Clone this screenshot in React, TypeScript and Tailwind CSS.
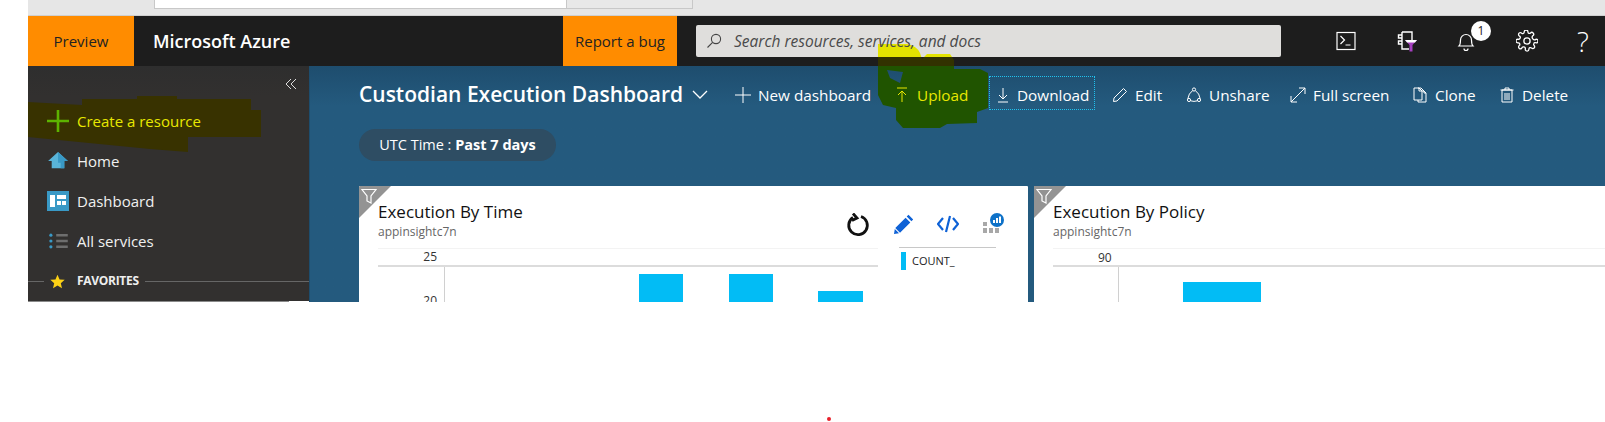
import type { ReactNode } from "react";

function Stroke({ children }: { children: ReactNode }) {
  return (
    <svg viewBox="0 0 16 16" fill="none" stroke="currentColor" strokeWidth="1" className="h-4 w-4 shrink-0">
      {children}
    </svg>
  );
}

function ToolItem({ icon, label, className = "" }: { icon: ReactNode; label: string; className?: string }) {
  return (
    <div className={"flex items-center gap-[7px] text-[15.3px] leading-5 text-white " + className}>
      <Stroke>{icon}</Stroke>
      <span>{label}</span>
    </div>
  );
}

function NavItem({ icon, label, yellow }: { icon: ReactNode; label: string; yellow?: boolean }) {
  return (
    <div className="relative z-10 flex h-10 items-center pl-[17px]">
      <div className="mr-[6px] flex w-[26px] shrink-0 justify-center">{icon}</div>
      <span className={"text-[15px] " + (yellow ? "text-[#e8e800]" : "text-[#f0f0f0]")}>{label}</span>
    </div>
  );
}

function FilterCorner() {
  return (
    <div className="absolute left-0 top-0 z-10 h-[32px] w-[32px]">
      <svg viewBox="0 0 32 32" className="h-full w-full">
        <path d="M0 0h32L0 32z" fill="#939393" />
        <path d="M3 3.500h14l-5 6.500v7l-4-2v-5z" fill="none" stroke="#fff" strokeWidth="1.2" />
      </svg>
    </div>
  );
}

function Bar({ className }: { className: string }) {
  return <div className={"bg-[#02bcf5] " + className} />;
}

function CardHead({ title }: { title: string }) {
  return (
    <div className="h-[63px] border-b border-[#f3f3f3] pt-[14px]">
      <div className="text-[17px] font-medium leading-6 text-[#111]">{title}</div>
      <div className="text-[12px] leading-[16px] text-[#666]">appinsightc7n</div>
    </div>
  );
}

export default function App() {
  return (
    <div className="relative isolate h-[422px] w-[1605px] overflow-hidden bg-white font-['Open_Sans','Noto_Sans',sans-serif]">
      <div className="ml-[28px]">
        {/* browser strip */}
        <div className="flex h-[16px] items-start border-b border-[#cfcfcf] bg-[#e6e6e6] pl-[126px]">
          <div className="h-[9px] w-[413px] border-x border-b border-[#c8c8c8] bg-white" />
          <div className="h-[9px] w-[126px] border-r border-b border-[#c8c8c8] bg-[#e8e8e8]" />
        </div>

        {/* top bar */}
        <div className="flex h-[50px] items-stretch bg-[#1d1d1d]">
          <div className="relative z-10 flex w-[106px] items-center justify-center bg-[#ff8c00] text-[15px] text-[#222]">Preview</div>
          <div className="relative z-10 flex w-[429px] items-center pl-[19px] text-[18px] font-semibold text-white">Microsoft Azure</div>
          <div className="relative z-10 flex w-[114px] items-center justify-center bg-[#ff8c00] text-[15px] text-[#222]">Report a bug</div>
          <div className="ml-[19px] mt-[9px] flex h-[32px] w-[585px] items-center rounded-[2px] bg-[#dfdedc] pl-[10px]">
            <svg viewBox="0 0 16 16" fill="none" stroke="#444" strokeWidth="1.1" className="relative z-10 h-4 w-4">
              <circle cx="10" cy="6" r="4.600" />
              <path d="M6.600 9.400L1.500 14.500" />
            </svg>
            <span className="relative z-10 ml-[12px] pt-[1px] text-[15.5px] italic text-[#4a4a4a]">Search resources, services, and docs</span>
          </div>
          <div className="relative z-10 ml-[55px] flex items-center text-white">
            <svg viewBox="0 0 20 20" fill="none" stroke="#fff" strokeWidth="1.2" className="h-5 w-5">
              <rect x="1" y="1.500" width="18" height="17" />
              <path d="M4.500 5l4 4-4 4M9.500 14h5" />
            </svg>
            <svg viewBox="0 0 22 22" fill="none" strokeWidth="1.4" className="ml-[40px] h-[22px] w-[22px]">
              <path d="M6 2h10v8M13 19H6V2M6 5H2.500v3H6M6 11H2.500v3H6" stroke="#fff" />
              <path d="M9 10h12l-4.500 5v6.500h-3V15z" fill="#a53fc0" />
              <path d="M9 10h12l-2 2.500h-8z" fill="#fff" />
            </svg>
            <div className="relative ml-[38px]">
              <svg viewBox="0 0 20 22" fill="none" stroke="#fff" strokeWidth="1.2" className="h-[22px] w-5">
                <path d="M3 16c1.500-1.500 1.500-3 1.500-6a5.500 5.500 0 0111 0c0 3 0 4.500 1.500 6zM8 18.500a2 2 0 004 0" />
              </svg>
              <div className="absolute -right-[15px] -top-[9px] flex h-[20px] w-[20px] items-center justify-center rounded-full bg-white text-[12px] text-[#222]">1</div>
            </div>
            <svg viewBox="0 0 24 24" fill="none" stroke="#fff" strokeWidth="1.4" className="ml-[40px] h-[22px] w-[22px]">
              <circle cx="12" cy="12" r="3.400" />
              <path d="M19.400 15a1.650 1.650 0 00.33 1.820l.06.06a2 2 0 11-2.830 2.830l-.06-.06a1.650 1.650 0 00-2.800 1.170V21a2 2 0 11-4 0v-.09A1.650 1.650 0 006.300 19.800l-.06.06a2 2 0 11-2.830-2.830l.06-.06A1.650 1.650 0 002.300 14H2a2 2 0 110-4h.09A1.650 1.650 0 003.400 6.300l-.06-.06a2 2 0 112.830-2.830l.06.06A1.650 1.650 0 009 2.300V2a2 2 0 114 0v.09a1.650 1.650 0 002.800 1.170l.06-.06a2 2 0 112.830 2.830l-.06.06A1.650 1.650 0 0021.900 10H22a2 2 0 110 4h-.09a1.650 1.650 0 00-2.510 1z" />
            </svg>
            <span className="ml-[39px] text-[28px] font-light leading-none">?</span>
          </div>
        </div>

        {/* body */}
        <div className="flex h-[236px]">
          <aside className="w-[281px] shrink-0 border-b border-[#8a8a8a] bg-linear-to-b from-[#2e2e2e] to-[#32302f] to-[30px]">
            <div className="relative z-10 flex h-[35px] items-center justify-end pr-[12px]">
              <svg viewBox="0 0 12 12" fill="none" stroke="#ddd" strokeWidth="1" className="h-3 w-3">
                <path d="M6 1L1 6l5 5M11 1L6 6l5 5" />
              </svg>
            </div>
            <NavItem
              yellow
              label="Create a resource"
              icon={
                <svg viewBox="0 0 22 22" className="h-[22px] w-[22px]" stroke="#5db300" strokeWidth="2.600">
                  <path d="M11 0v22M0 11h22" />
                </svg>
              }
            />
            <NavItem
              label="Home"
              icon={
                <svg viewBox="0 0 22 20" className="h-[18px] w-[22px]">
                  <path d="M11 0L0 10h4v8h14v-8h4z" fill="#59b4d9" />
                  <path d="M11 0L22 10h-4v8h-4v-6h-3z" fill="#3999c6" />
                </svg>
              }
            />
            <NavItem
              label="Dashboard"
              icon={
                <svg viewBox="0 0 22 20" className="h-[20px] w-[22px]">
                  <rect width="22" height="20" fill="#3999c6" />
                  <path d="M3 4h5v12H3zM10 4h9v4h-9zM10 10h4v4h-4zM15 10h4v4h-4z" fill="#fff" />
                </svg>
              }
            />
            <NavItem
              label="All services"
              icon={
                <svg viewBox="0 0 22 18" className="h-[16px] w-[20px]">
                  <path d="M9 1h13v3H9zM9 7.500h13v3H9zM9 14h13v3H9z" fill="#6e6e6e" />
                  <circle cx="3" cy="2.500" r="1.800" fill="#3999c6" />
                  <circle cx="3" cy="9" r="1.800" fill="#3999c6" />
                  <circle cx="3" cy="15.500" r="1.800" fill="#3999c6" />
                </svg>
              }
            />
            <div className="relative z-10 flex h-[40px] items-center">
              <div className="h-px w-[16px] bg-[#666]" />
              <svg viewBox="0 0 24 24" className="ml-[6px] h-[15px] w-[15px]" fill="#fcd116">
                <path d="M12 1l3.300 7.600 8.200.7-6.200 5.400 1.900 8.100L12 18.500l-7.200 4.300 1.900-8.100L.5 9.300l8.200-.7z" />
              </svg>
              <span className="ml-[12px] text-[12px] font-bold tracking-[-0.3px] text-[#eee]">FAVORITES</span>
              <div className="ml-[6px] h-px flex-1 bg-[#666]" />
            </div>
          </aside>

          <main className="min-w-0 flex-1 overflow-hidden border-l-[1px] border-[#1d4d6e] bg-linear-to-b from-[#1e4d6e] to-[#245a7e] to-[40px]">
            <div className="flex h-[63px] items-center pb-[6px] pl-[49px]">
              <div className="relative z-10 flex flex-1 items-center pt-[1px]">
                <span className="w-[333px] shrink-0 text-[21px] font-semibold text-white">Custodian Execution Dashboard</span>
                <svg viewBox="0 0 16 10" fill="none" stroke="#fff" strokeWidth="1.3" className="h-[10px] w-4">
                  <path d="M1 1l7 7 7-7" />
                </svg>
                <ToolItem className="ml-[27px] w-[162px]" label="New dashboard" icon={<path d="M8 0v16M0 8h16" />} />
                <div className="flex w-[92px] items-center gap-[10px] text-[15.3px] text-[#e8e800]">
                  <svg viewBox="0 0 10 16" fill="none" stroke="currentColor" className="h-4 w-[10px] shrink-0">
                    <path d="M0 1h10M5 15V4M1 8l4-4 4 4" />
                  </svg>
                  <span>Upload</span>
                </div>
                <div className="mb-[4px] flex h-[34px] w-[106px] items-center gap-[9px] border border-dotted border-[#1fc3f0] pl-[8px] pt-[4px] text-[15.3px] text-white">
                  <svg viewBox="0 0 10 16" fill="none" stroke="currentColor" className="h-4 w-[10px] shrink-0">
                    <path d="M0 15h10M5 1v11M1 8l4 4 4-4" />
                  </svg>
                  <span>Download</span>
                </div>
                <ToolItem className="ml-[17px] w-[74px]" label="Edit" icon={<path d="M11.500 1.500l3 3L5 14l-3.500.5L2 11z" />} />
                <ToolItem
                  className="w-[104px]"
                  label="Unshare"
                  icon={
                    <>
                      <circle cx="8" cy="2.500" r="1.600" />
                      <circle cx="3" cy="13" r="1.600" />
                      <circle cx="13" cy="13" r="1.600" />
                      <path d="M6.700 3.500Q2.500 6.500 1.800 11.800M9.300 3.500Q13.500 6.500 14.200 11.800M4.600 13.800Q8 15 11.400 13.800" />
                    </>
                  }
                />
                <ToolItem className="w-[122px]" label="Full screen" icon={<path d="M1 15L15 1M9 1h6v6M1 9v6h6" />} />
                <ToolItem
                  className="w-[87px]"
                  label="Clone"
                  icon={<path d="M2 1h5l3 3v9H2zM7 1v3h3M6 1h3l3 3v0l2 2v9H6v-2M10 4h2v2h2" />}
                />
                <ToolItem label="Delete" icon={<path d="M3 3h10v12H3zM1.500 3h13M6 3V1h4v2M6 6v7M8 6v7M10 6v7" />} />
              </div>
            </div>

            <div className="relative z-10 ml-[49px] flex h-[32px] w-[197px] items-center justify-center rounded-full bg-[#2e4d63] text-[14.5px] text-white">
              UTC Time :&nbsp;<b>Past 7 days</b>
            </div>

            <div className="mt-[25px] flex pl-[49px]">
              {/* first card */}
              <div className="relative h-[200px] w-[669px] shrink-0 overflow-hidden rounded-[1px] bg-white px-[19px]">
                <FilterCorner />
                <div className="flex">
                  <div className="w-[500px] shrink-0">
                    <div className="relative">
                      <CardHead title="Execution By Time" />
                      <div className="absolute right-0 top-[27px] flex items-center">
                        <svg viewBox="0 0 24 24" fill="none" stroke="#111" strokeWidth="2.800" className="mr-[8px] h-[24px] w-[24px]">
                          <path d="M15 3.500a9.300 9.300 0 11-8 1" />
                          <path d="M7 .5l4 4.500-5 2.500" />
                        </svg>
                      </div>
                    </div>
                    <div className="flex h-[18px] items-center border-b-2 border-[#dcdcdc] pr-[441px] text-right text-[12px] text-[#333]">
                      <span className="w-full">25</span>
                    </div>
                    <div className="flex">
                      <div className="w-[67px] shrink-0 border-r border-[#d0d0d0] pr-[7px] pt-[26px] text-right text-[12px] leading-4 text-[#333]">20</div>
                      <div className="flex items-start pt-[7px]">
                        <Bar className="ml-[194px] h-[40px] w-[44px]" />
                        <Bar className="ml-[46px] h-[40px] w-[44px]" />
                        <Bar className="ml-[45px] mt-[17px] h-[30px] w-[45px]" />
                      </div>
                    </div>
                  </div>
                  <div className="relative -ml-[21px] w-[190px]">
                    <div className="absolute left-0 top-[27px] flex items-center gap-[23px] pl-[37px]">
                      <svg viewBox="0 0 20 20" className="h-[20px] w-[20px]" fill="#0f62d6">
                        <path d="M14.500.8l4.700 4.700-1.800 1.800-4.700-4.700zM11.600 3.700l4.700 4.700L6 18.700 1.300 14zM.8 15l4.200 4.200-5 .8z" />
                      </svg>
                      <svg viewBox="0 0 22 20" fill="none" stroke="#0f62d6" strokeWidth="2.200" className="h-[20px] w-[22px]">
                        <path d="M6 4l-5 6 5 6M16 4l5 6-5 6M13 2L9 18" />
                      </svg>
                      <svg viewBox="0 0 22 22" className="h-[22px] w-[22px]">
                        <path d="M1 9h4v4H1zM1 15h4v5H1zM7 15h4v5H7zM13 15h4v5h-4z" fill="#a8a8a8" />
                        <circle cx="15" cy="7" r="7" fill="#0f72c8" />
                        <path d="M11 7h2v3h-2zM14 5h2v5h-2zM17 3.500h2V10h-2z" fill="#fff" />
                      </svg>
                    </div>
                    <div className="ml-[42px] mt-[61px] w-[97px] border-t border-[#c8c8c8] pl-[2px] pt-[4px]">
                      <div className="flex h-[18px] items-center gap-[6px] text-[11px] text-[#222]">
                        <div className="h-[18px] w-[5px] bg-[#02bcf5]" />
                        COUNT_
                      </div>
                    </div>
                  </div>
                </div>
              </div>

              {/* second card */}
              <div className="relative ml-[6px] h-[200px] flex-1 overflow-hidden bg-white pl-[19px]">
                <FilterCorner />
                <CardHead title="Execution By Policy" />
                <div className="h-[18px] border-b-2 border-[#dcdcdc] pl-[45px] text-[12px] leading-[18px] text-[#333]">90</div>
                <div className="flex">
                  <div className="h-[40px] w-[66px] shrink-0 border-r border-[#d0d0d0]" />
                  <Bar className="ml-[64px] mt-[15px] h-[30px] w-[78px]" />
                </div>
              </div>
            </div>
          </main>
        </div>
      </div>

      {/* marker scribbles from the person who took the screenshot */}
      <svg viewBox="0 0 1605 422" className="absolute inset-0 z-0 h-[422px] w-[1605px]">
        <defs>
          <path
            id="blob"
            fillRule="evenodd"
            d="M878 50V44H907Q917 46 920 53L922 59L927 54H950L954 60V69H980L988 73V108L977 112V123L947 124L940 128H903L896 120V108L883 105L878 95ZM887 70L903 72L900 83L890 78Z"
          />
          <clipPath id="onSearch"><rect x="870" y="40" width="130" height="17" /></clipPath>
          <clipPath id="onBar"><rect x="870" y="57" width="130" height="9" /></clipPath>
          <clipPath id="onMain"><rect x="870" y="66" width="130" height="70" /></clipPath>
        </defs>
        <use href="#blob" fill="#e3e300" clipPath="url(#onSearch)" />
        <use href="#blob" fill="#323200" clipPath="url(#onBar)" />
        <use href="#blob" fill="#205400" clipPath="url(#onMain)" />
        <path d="M28 102l54 3v-6h55v-3h40v3h74v11h10v27h-73v15l-38-3-122-12z" fill="#383200" />
      </svg>

      {/* small white nick at the sidebar's bottom edge */}
      <div className="absolute left-[289px] top-[301px] h-px w-[20px] bg-white" />
      <div className="absolute left-[827px] top-[417px] h-[4px] w-[4px] rounded-full bg-[#e8202a]" />
    </div>
  );
}
